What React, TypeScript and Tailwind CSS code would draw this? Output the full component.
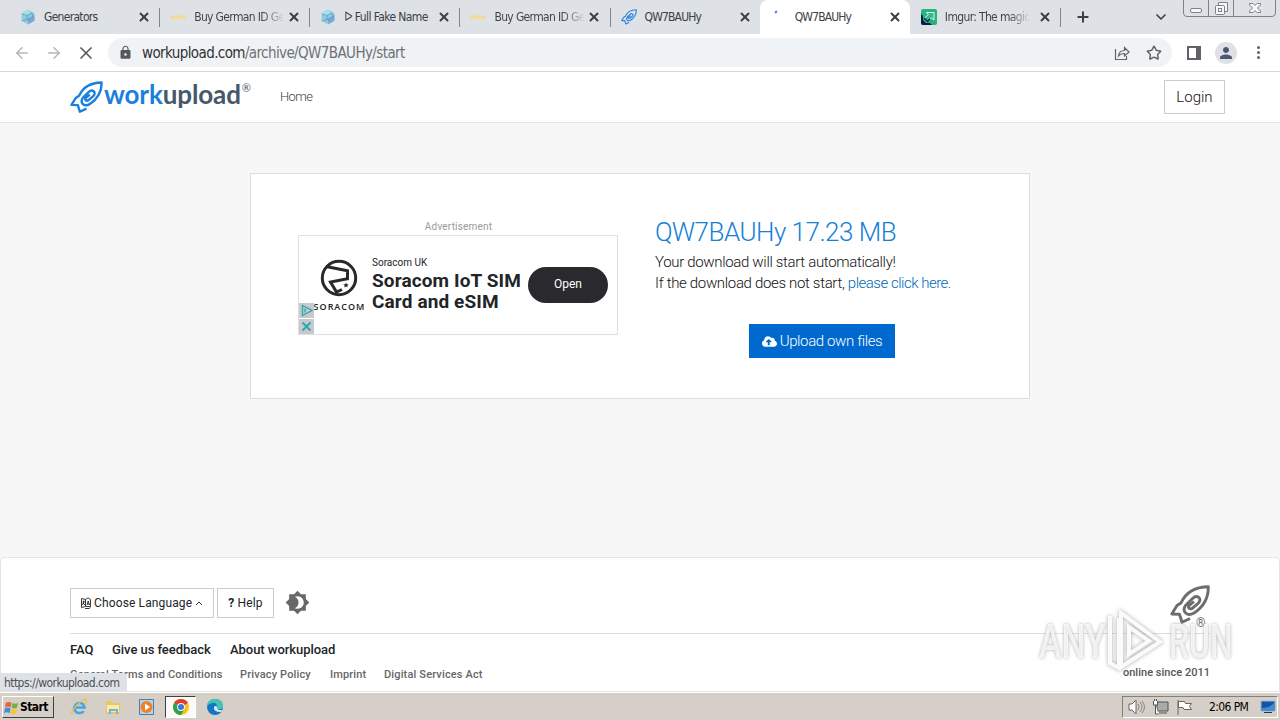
import type { ReactNode } from 'react';
import { ArrowLeft, ArrowRight, ChevronDown, Plus, Star, X } from 'lucide-react';
import { FaCloudUploadAlt } from 'react-icons/fa';
import { MdBrightness4, MdLock, MdPerson } from 'react-icons/md';

const ui = "font-['DejaVu_Sans_Condensed','DejaVu_Sans',sans-serif] [font-stretch:condensed]";

function Rocket({ className }: { className: string }) {
  return (
    <svg viewBox="0 0 40 40" className={className} fill="none" stroke="currentColor" strokeWidth="2.9" strokeLinejoin="round">
      <path d="M20 33.500L12 37.300L9.500 29.200L1.800 29L7 20.500L11 18C15.500 8 25 2 38.300 1.800C38.500 14 33 22 24 28C17 32 11.500 26.500 15.500 20.500L22.500 13.500C27 9 32.500 13.500 28.500 18L22.500 23.200C19.500 25 17.500 22.500 19.300 20.500L24 16.500" />
    </svg>
  );
}

function Hex() {
  return (
    <svg viewBox="0 0 16 16" className="size-4 shrink-0">
      <path d="M8 .5l6.500 3.700v7.600L8 15.500l-6.500-3.700V4.200z" fill="#8fcbe2" />
      <path d="M1.500 4.200L8 .5l3 3-4 4z" fill="#a5dfe2" />
      <path d="M8 9l6.500-3v5.800L8 15.500z" fill="#86a9da" />
      <path d="M2 5l5 1.500L12 4M7 6.500v4l5 2M7 10.500l-5 1.500M12 4l1 5-6 1.500" stroke="#5f9fc9" fill="none" strokeWidth=".9" />
    </svg>
  );
}

function Stars() {
  return (
    <svg viewBox="0 0 16 16" className="size-4 shrink-0">
      <path d="M0 8.500h16" stroke="#eadfc2" strokeWidth="4.500" />
      <path d="M1 9.500l2-2.500 2 2.500M6 9.500l2-2.500 2 2.500M11 9.500l2-2.500 2 2.500" stroke="#f0da90" strokeWidth="2" fill="none" />
    </svg>
  );
}

function Imgur() {
  return (
    <svg viewBox="0 0 16 16" className="size-4 shrink-0">
      <rect width="16" height="16" rx="2" fill="#27b380" />
      <path d="M0 5v9q0 2 2 2h9l-2-2H5L2 11V7z" fill="#0d1c45" />
      <path d="M5.500 3.500h7.500V11l-2.500-2.200-4 4-3.300-3.300 4-4z" fill="#36b98a" stroke="#dff8ec" strokeWidth="1" />
      <path d="M3 9l3.500 3.500L9 10" stroke="#10234a" strokeWidth="1.500" fill="none" />
    </svg>
  );
}

function Spinner() {
  return (
    <svg viewBox="0 0 16 16" className="size-4 shrink-0">
      <path d="M4 3.800l2-1.500" stroke="#3b7fd4" strokeWidth="2" />
    </svg>
  );
}

type TabProps = { icon: ReactNode; title: string; active?: boolean; fade?: boolean; line?: boolean; spacing: string };

function Tab({ icon, title, active, fade, line, spacing }: TabProps) {
  return (
    <div className={`relative flex h-[34px] flex-1 items-center pl-[11px] ${active ? 'rounded-t-lg bg-white' : ''}`}>
      {icon}
      <span className="ml-2 w-[88px] text-[12px] leading-4 whitespace-nowrap text-[#3c4043]">
        <span className={`inline-block ${spacing} ${fade ? 'bg-gradient-to-r from-[#3c4043] from-75% to-[#dee1e6] to-[100%] bg-clip-text text-transparent' : ''}`}>{title}</span>
      </span>
      <X className="ml-[5px] size-[14px] shrink-0 text-[#3c4043]" strokeWidth={3.4} />
      {line && <span className="absolute top-2 -right-px h-[19px] w-px bg-[#80858b]" />}
    </div>
  );
}

function Chrome() {
  return (
    <svg viewBox="0 0 16 16" className="size-4">
      <circle cx="8" cy="8" r="8" fill="#fbc116" />
      <path d="M8 8L1.100 4A8 8 0 0 1 14.900 4z" fill="#e33b2e" />
      <path d="M8 8L1.100 4A8 8 0 0 0 8 16l3.500-6z" fill="#2aa14b" />
      <circle cx="8" cy="8" r="3.900" fill="#fff" />
      <circle cx="8" cy="8" r="3" fill="#3478e4" />
    </svg>
  );
}

export default function App() {
  return (
    <div className="relative flex h-[720px] w-[1280px] flex-col overflow-hidden bg-[#f7f7f7] font-['Roboto',sans-serif] text-[#212529]">
      <header className={ui}>
        <div className="flex h-[34px] items-start bg-[#dee1e6]">
          <div className="ml-[9px] flex w-[1051px]">
            <Tab icon={<Hex />} title="Generators" line spacing="tracking-[-0.7px]" />
            <Tab icon={<Stars />} title="Buy German ID Ge" fade line spacing="tracking-[-0.65px]" />
            <Tab icon={<Hex />} title="ᐅ Full Fake Name" line spacing="tracking-[-0.6px]" />
            <Tab icon={<Stars />} title="Buy German ID Ge" fade line spacing="tracking-[-0.65px]" />
            <Tab icon={<Rocket className="size-4 shrink-0 text-[#2d86df]" />} title="QW7BAUHy" spacing="tracking-[-0.85px]" />
            <Tab icon={<Spinner />} title="QW7BAUHy" active spacing="tracking-[-0.85px]" />
            <Tab icon={<Imgur />} title="Imgur: The magic" fade line spacing="tracking-[-0.65px]" />
          </div>
          <Plus className="mt-[9px] ml-[15px] size-4 text-[#3c4043]" strokeWidth={3} />
          <ChevronDown className="mt-[9px] ml-[62px] size-4 text-[#3c4043]" strokeWidth={2.5} />
          <svg viewBox="0 0 94 18" className="ml-[14px] h-[18px] w-[94px]" fill="none" stroke="#7d8289">
            <path d="M.5 0v13q0 3.500 3.500 3.500h85q3.500 0 3.500-3.500V0M25.500 0v16M50.500 0v16" />
            <rect x="7.500" y="8.500" width="11" height="4" rx="1.500" fill="#f5f6f7" />
            <path d="M35.500 5V2.500h9v9H42" fill="#f5f6f7" />
            <rect x="32.500" y="5.500" width="9" height="9" rx="1" fill="#f5f6f7" />
            <rect x="35.500" y="8.500" width="3" height="3" />
            <path d="M66.500 3.500h3.500l2 2 2-2h3.500v1.500L74.500 8l3 3v1.500H74l-2-2-2 2h-3.500V11l3-3-3-3z" fill="#f5f6f7" />
          </svg>
        </div>
        <div className="flex h-[38px] items-center border-b border-[#d5d7d9] bg-white pl-[13px]">
          <ArrowLeft className="size-[18px] text-[#b4b6b9]" strokeWidth={2} />
          <ArrowRight className="ml-[14px] size-[18px] text-[#b4b6b9]" strokeWidth={2} />
          <X className="ml-[13px] size-[20px] text-[#55585c]" strokeWidth={2} />
          <div className="ml-[12px] flex h-[29px] w-[1064px] items-center rounded-full bg-[#f0f3f5]">
            <MdLock className="ml-[10px] size-[15px] text-[#55585c]" />
            <span className="mt-px ml-[9px] w-[264px] text-[15px] tracking-[-0.6px] whitespace-nowrap text-[#6d7175]">
              <span className="text-[#303134]">workupload.com</span>/archive/QW7BAUHy/start
            </span>
            <svg viewBox="0 0 16 16" className="ml-[708px] size-4" fill="none" stroke="#5f6368" strokeWidth="1.200">
              <path d="M1.500 4v10.500h11V11M4.500 11q.5-5.500 6-5.500V2.500L15 7l-4.500 4V8.500Q6.500 8.500 4.500 11z" />
            </svg>
            <Star className="ml-[16px] size-4 text-[#5f6368]" strokeWidth={2.200} />
          </div>
          <span className="ml-[15px] h-[14px] w-[14px] border-2 border-r-[5px] border-[#5f6368]" />
          <span className="ml-[14px] flex size-[22px] items-center justify-center rounded-full bg-[#dee1e6]">
            <MdPerson className="size-[18px] text-[#4a5775]" />
          </span>
          <span className="ml-[20px] flex flex-col gap-[2px]">
            <i className="size-[3px] rounded-full bg-[#5f6368]" />
            <i className="size-[3px] rounded-full bg-[#5f6368]" />
            <i className="size-[3px] rounded-full bg-[#5f6368]" />
          </span>
        </div>
      </header>

      <nav className="flex h-[51px] items-center border-b border-[#e5e5e5] bg-white pl-[70px]">
        <Rocket className="size-[33px] text-[#1a80e0]" />
        <span className="ml-px flex h-8 w-[147px] items-start font-['Lato',sans-serif] text-[26px] leading-[26px] font-bold tracking-[-0.12px] whitespace-nowrap text-[#46586a]">
          <span className="text-[#1a80e0]">work</span>upload
          <sup className="top-0 ml-px text-[11px] leading-[13px] font-normal tracking-normal">®</sup>
        </span>
        <a className="ml-[29px] w-[33px] text-[13px] font-light tracking-[-0.6px] text-[#444]">Home</a>
        <button className="ml-[851px] h-[34px] w-[61px] border border-[#ccc] bg-white text-[15px] font-light text-[#111]">Login</button>
      </nav>

      <main className="flex h-[434px] justify-center pt-[50px]">
        <section className="flex h-[226px] w-[780px] border border-[#ddd] bg-white pl-[47px]">
          <div className="w-[320px] pt-[46px]">
            <p className="h-[15px] pl-px text-center text-[10px] leading-[13px] tracking-[0.18px] text-[#999]">Advertisement</p>
            <div className="relative flex h-[100px] border border-[#e0e0e0]">
              <div className="ml-[11px] flex w-[58px] flex-col items-center pt-[23px]">
                <svg viewBox="0 0 38 38" className="size-[38px]" fill="none" stroke="#292929" strokeWidth="3">
                  <circle cx="19" cy="19" r="16.700" />
                  <path d="M6 7.500L27.500 11.700V19.800L10.500 23L16.500 33L22 30.500" />
                  <path d="M26 23.500l.8 1.700 1.900.2-1.400 1.300.4 1.900-1.700-1-1.700 1 .4-1.900-1.400-1.300 1.900-.2z" fill="#292929" stroke="none" />
                </svg>
                <span className="mt-[4px] ml-px font-['Open_Sans',sans-serif] text-[9px] leading-[11px] font-semibold tracking-[1px] text-[#222]">SORACOM</span>
              </div>
              <div className="ml-[4px] w-[156px] pt-[20px] whitespace-nowrap">
                <p className="text-[10px] leading-[14px]">Soracom UK</p>
                <p className="text-[19px] leading-[21px] font-bold tracking-[0.12px]">Soracom IoT SIM<br />Card and eSIM</p>
              </div>
              <button className="mt-[31px] h-9 w-20 rounded-full bg-[#29292e] pb-[2px] text-[12px] text-white">Open</button>
              <div className="absolute bottom-0 left-0 flex flex-col gap-px">
                <svg viewBox="0 0 15 15" className="size-[15px] bg-[#c9c9cd]" fill="none" stroke="#26a8b0" strokeWidth="1.300"><path d="M3.500 2.500v10l9.500-5zM6 5.500v4" /></svg>
                <svg viewBox="0 0 15 15" className="size-[15px] bg-[#c9c9cd]" fill="none" stroke="#26a8b0" strokeWidth="1.800"><path d="M3.500 3.500l8 8M11.500 3.500l-8 8" /></svg>
              </div>
            </div>
          </div>
          <div className="ml-[37px] pt-[43px] text-[15px] leading-[21px] font-light whitespace-nowrap text-[#111]">
            <h1 className="h-[35px] text-[26px] leading-[31px] font-light tracking-[-0.52px] text-[#1481d5]">QW7BAUHy 17.23 MB</h1>
            <p className="tracking-[-0.33px]">Your download will start automatically!</p>
            <p className="tracking-[-0.33px]">If the download does not start, <a className="tracking-[-0.49px] text-[#0069b8]">please click here.</a></p>
            <button className="mt-[30px] ml-[94px] flex h-[34px] w-[146px] items-center justify-center gap-[3px] bg-[#0069d0] tracking-[-0.38px] text-white">
              <FaCloudUploadAlt className="size-[15px]" />Upload own files
            </button>
          </div>
        </section>
      </main>

      <footer className="relative flex h-[135px] flex-col rounded-t border border-[#e5e5e5] bg-white px-[69px]">
        <div className="flex h-[76px] items-start border-b border-[#ddd]">
          <button className="mt-[30px] flex h-[30px] w-[144px] shrink-0 items-center border border-[#ccc] pl-[9px] text-[12px] tracking-[0.13px] whitespace-nowrap">
            <svg viewBox="0 0 12 12" className="mr-[2px] size-3" fill="none" stroke="#222">
              <path d="M1.500 1.500l4 1v7l-4 1zM5.500 2.500L8 .8l2.500 1.700v7l-5 0M2.500 5h2.500M3.700 3.500v1.500L2.500 8M3 6l2 2M7 8l1.200-4L9.500 8M7.500 7H9M5 11.500h4l1.500-1" strokeWidth=".9" />
            </svg>
            Choose Language
            <svg viewBox="0 0 8 8" className="ml-[3px] size-2" fill="none" stroke="#333"><path d="M1 6l3-3 3 3" /></svg>
          </button>
          <button className="mt-[30px] ml-[3px] h-[30px] w-[57px] shrink-0 border border-[#ccc] text-[12px] tracking-[0.15px]"><b>?</b> Help</button>
          <MdBrightness4 className="mt-[32px] ml-[11px] size-[25px] shrink-0 text-[#686868]" />
          <div className="ml-auto flex h-[44px] w-10 flex-col pt-[27px] text-[#6d6d6d]">
            <Rocket className="size-10 shrink-0" />
            <span className="-mt-[8px] ml-[26px] text-[12px] leading-[12px]">®</span>
          </div>
        </div>
        <div className="flex h-[32px] items-center text-[13px] font-medium tracking-[-0.05px] whitespace-nowrap">
          <a className="w-[42px]">FAQ</a><a className="w-[118px]">Give us feedback</a><a>About workupload</a>
        </div>
        <div className="flex h-[17px] items-center pt-[2px] text-[11px] font-medium tracking-[0.15px] whitespace-nowrap text-[#666]">
          <a className="w-[170px]">General Terms and Conditions</a><a className="w-[90px]">Privacy Policy</a><a className="w-[54px]">Imprint</a><a>Digital Services Act</a>
          <span className="mt-[-4px] ml-auto tracking-[0.02px] text-[#555]">online since 2011</span>
        </div>
        <div className="absolute top-[50px] left-[1038px] flex items-center font-['Roboto',sans-serif] text-[49px] leading-[68px] font-medium text-white/80 [text-shadow:0_0_4px_#aaa]">
          <span className="w-[68px] origin-left scale-x-[0.69]">ANY</span>
          <svg viewBox="0 0 60 68" className="h-[68px] w-[60px] drop-shadow-[0_0_2px_#aaa]" fill="none" stroke="#fbfbfb" strokeWidth="4"><path d="M3 8v47l9 5V10M14 5v54L53 34zM22 19v27l20-13z" /></svg>
          <span className="ml-[2px] w-[68px] origin-left scale-x-[0.65]">RUN</span>
        </div>
        <div className={`${ui} absolute bottom-[-1px] left-[-1px] h-[19px] w-[127px] rounded-tr-sm bg-[#dee1e6] pl-[4px] text-[12px] leading-[20px] tracking-[-0.56px] whitespace-nowrap text-[#4d5156]`}>https://workupload.com</div>
      </footer>

      <div className={`${ui} flex h-[28px] items-center border-t border-white bg-[#d5cfc7]`}>
        <button className="ml-[2px] flex h-[22px] w-[52px] items-center border border-t-white border-r-[#404040] border-b-[#404040] border-l-white pt-px pl-px text-[12px] font-bold tracking-[-0.55px] text-black">
          <svg viewBox="0 0 16 16" className="mr-px size-[15px] shrink-0"><path d="M2 3q3-2 6 0L7 8Q4 6 1 8z" fill="#eb6236" /><path d="M9 3q3 2 6 0l-1 5q-3 2-6 0z" fill="#70b244" /><path d="M1 9q3-2 6 0l-1 5q-3-2-6 0z" fill="#408ed7" /><path d="M8 9q3 2 6 0l-1 5q-3 2-6 0z" fill="#f7c633" /></svg>Start
        </button>
        <svg viewBox="0 0 18 18" className="ml-[16px] size-[18px]" fill="none"><path d="M5 9.500h9.500Q13.500 5 9.500 5T4 10q1 5 5.500 5 3 0 4-2" stroke="#42a8e3" strokeWidth="2.600" /><path d="M3 16Q-1 15 7 7t9-5q1 1-1 4" stroke="#efbf4a" strokeWidth="1.400" /></svg>
        <svg viewBox="0 0 18 18" className="ml-[16px] size-[18px]"><path d="M2 3h6l1 2h7v11H2z" fill="#e8c866" /><path d="M3 7h12v7H3z" fill="#f9eba9" /><path d="M5 11h9v5h-2v-3H7v3H5z" fill="#6fb4dc" /></svg>
        <svg viewBox="0 0 18 18" className="ml-[16px] size-[18px]"><path d="M1.500 1.500h14v15h-14z" fill="#b4d5ee" stroke="#467eae" /><circle cx="8.500" cy="9" r="6" fill="#ee8325" /><path d="M7 5.500l5 3.500-5 3.500z" fill="#fff" /></svg>
        <div className="ml-[9px] flex h-[22px] w-[31px] items-center justify-center border border-t-[#404040] border-r-white border-b-white border-l-[#404040] bg-[#fbfaf8]"><Chrome /></div>
        <svg viewBox="0 0 18 18" className="ml-[10px] size-[18px]"><circle cx="9" cy="9" r="8" fill="#1673c5" /><path d="M1 9Q1 1 9 1t8 7q0 4-5 3-3-1-1-3-1-4-5-3T1 9z" fill="#44c3b2" /><path d="M8 9q-1 5 7 5l2-2q-6 1-6-3-2-2-3 0z" fill="#d6edf5" /></svg>
        <div className="mr-[2px] ml-auto flex h-[22px] w-[156px] items-center border border-t-[#808080] border-r-white border-b-white border-l-[#808080] whitespace-nowrap text-black">
          <svg viewBox="0 0 18 16" className="ml-[5px] h-4 w-[18px]" fill="none" stroke="#666"><path d="M1 5h3l4-4v14l-4-4H1z" fill="#fff" /><path d="M10 5q2 3 0 6M12 3q4 5 0 10M14 2q5 6 0 12" stroke="#888" /></svg>
          <svg viewBox="0 0 17 16" className="ml-[6px] h-4 w-[17px]" fill="#fff" stroke="#555"><path d="M5 3h11v9H5z" fill="#aaa" /><path d="M7 14h8M1.500 2v4h4V2M3.500 6v9h3M2.500 0v2M4.500 0v2" /></svg>
          <svg viewBox="0 0 17 16" className="ml-[7px] h-4 w-[17px]" fill="#fff" stroke="#666"><path d="M2 1v15M2.500 2.500h6l1 2h6l-2 3 2 3H8l-1-2H2.500z" /></svg>
          <span className="ml-[16px] w-[40px] pt-px text-[12px] tracking-[-0.6px]">2:06 PM</span>
          <svg viewBox="0 0 16 14" className="ml-[11px] h-[14px] w-4"><path d="M1 1h14v10H1z" fill="#1456a4" stroke="#9cb6d2" /><path d="M2 8q8 0 12-5v7H2z" fill="#418dd4" /><path d="M4 12.500h8" stroke="#234" /></svg>
        </div>
      </div>
    </div>
  );
}
